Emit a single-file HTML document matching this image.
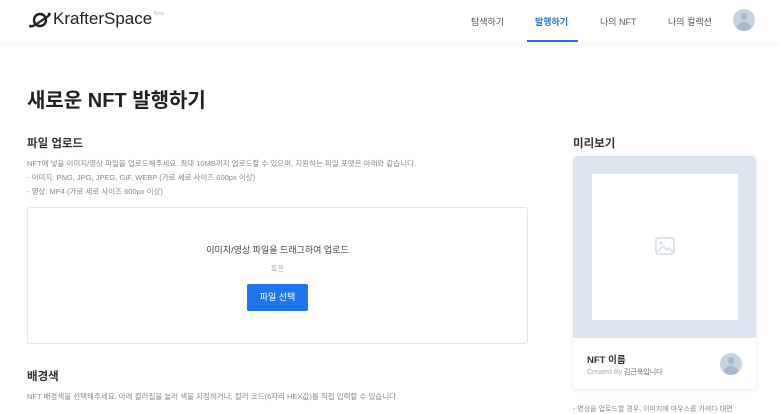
<!DOCTYPE html>
<html><head><meta charset="utf-8"><style>
*{margin:0;padding:0;box-sizing:border-box}
body{width:780px;height:408px;overflow:hidden;background:#fff;font-family:"Liberation Sans","Noto Sans CJK KR",sans-serif;color:#222;position:relative}
.a{position:absolute;white-space:nowrap}
.hdr{position:absolute;left:0;top:0;width:780px;height:42px;background:#fff;box-shadow:0 2px 6px rgba(0,0,0,0.06)}
.nav{font-size:9px;color:#555;top:15px}
.desc{font-size:7.5px;color:#888}
.av{position:absolute;border-radius:50%;background:#c5d3e2;overflow:hidden}
.av:before{content:"";position:absolute;left:35%;top:20%;width:30%;height:30%;border-radius:50%;background:#a7b9cc}
.av:after{content:"";position:absolute;left:18%;top:58%;width:64%;height:50%;border-radius:50% 50% 0 0;background:#a7b9cc}
</style></head><body>
<div class="hdr"></div>
<svg class="a" style="left:29px;top:11px" width="22" height="18" viewBox="0 0 22 18"><ellipse cx="11" cy="9" rx="6" ry="6" fill="none" stroke="#222" stroke-width="2.4"/><path d="M2 14 Q-1 17 6 14 L18 6 Q23 2 19 3" fill="none" stroke="#222" stroke-width="2.2"/></svg>
<div class="a" style="left:53px;top:9px;font-size:17px;color:#222">KrafterSpace</div>
<div class="a" style="left:154px;top:11px;font-size:5px;color:#bbb">Beta</div>
<div class="a nav" style="left:471px">탐색하기</div>
<div class="a nav" style="left:535px;color:#2a6fd6;font-weight:bold">발행하기</div>
<div class="a nav" style="left:600px">나의 NFT</div>
<div class="a nav" style="left:668px">나의 컬렉션</div>
<div class="a" style="left:527px;top:40px;width:51px;height:2px;background:#2a6fd6"></div>
<div class="av" style="left:733px;top:9px;width:22px;height:22px"></div>

<div class="a" style="left:27px;top:84px;font-size:20px;font-weight:bold;color:#222">새로운 NFT 발행하기</div>
<div class="a" style="left:27px;top:135px;font-size:11.5px;font-weight:bold;color:#333">파일 업로드</div>
<div class="a desc" style="left:27px;top:158px">NFT에 넣을 이미지/영상 파일을 업로드해주세요. 최대 10MB까지 업로드할 수 있으며, 지원하는 파일 포맷은 아래와 같습니다.</div>
<div class="a desc" style="left:27px;top:172px">- 이미지: PNG, JPG, JPEG, GIF, WEBP (가로 세로 사이즈 600px 이상)</div>
<div class="a desc" style="left:27px;top:186px">- 영상: MP4 (가로 세로 사이즈 600px 이상)</div>
<div class="a" style="left:27px;top:207px;width:501px;height:137px;border:1px solid #e6e6e6;border-radius:3px"></div>
<div class="a" style="left:27px;top:243px;width:501px;text-align:center;font-size:9px;color:#444">이미지/영상 파일을 드래그하여 업로드</div>
<div class="a" style="left:27px;top:263px;width:501px;text-align:center;font-size:7.5px;color:#aaa">혹은</div>
<div class="a" style="left:247px;top:284px;width:61px;height:27px;background:#1f74ec;border-radius:2px;color:#fff;font-size:9px;text-align:center;line-height:27px">파일 선택</div>
<div class="a" style="left:27px;top:368px;font-size:11.5px;font-weight:bold;color:#333">배경색</div>
<div class="a desc" style="left:27px;top:391px">NFT 배경색을 선택해주세요. 아래 컬러칩을 눌러 색을 지정하거나, 컬러 코드(6자리 HEX값)를 직접 입력할 수 있습니다.</div>

<div class="a" style="left:573px;top:135px;font-size:11.5px;font-weight:bold;color:#333">미리보기</div>
<div class="a" style="left:573px;top:156px;width:183px;height:233px;border-radius:4px;box-shadow:0 1px 4px rgba(0,0,0,0.1);overflow:hidden;background:#fff">
<div style="position:absolute;left:0;top:0;width:183px;height:182px;background:#dce5ef"></div>
<div style="position:absolute;left:19px;top:18px;width:146px;height:146px;background:#fff"></div>
</div>
<svg class="a" style="left:655px;top:237px" width="20" height="18" viewBox="0 0 20 18"><rect x="1" y="1" width="18" height="16" rx="1.5" fill="none" stroke="#d4dce6" stroke-width="1.5"/><circle cx="6" cy="6" r="1.6" fill="#d4dce6"/><path d="M2 15 L8 9 L12 13 L14 11 L18 15" fill="none" stroke="#d4dce6" stroke-width="1.5"/></svg>
<div class="a" style="left:587px;top:352px;font-size:9.5px;font-weight:bold;color:#333">NFT 이름</div>
<div class="a" style="left:587px;top:367px;font-size:7px;color:#aaa">Created By <span style="color:#666">김근욱입니다</span></div>
<div class="av" style="left:720px;top:353px;width:22px;height:22px"></div>
<div class="a desc" style="left:573px;top:404px;font-size:7px">- 영상을 업로드할 경우, 이미지에 마우스를 가져다 대면</div>
</body></html>
